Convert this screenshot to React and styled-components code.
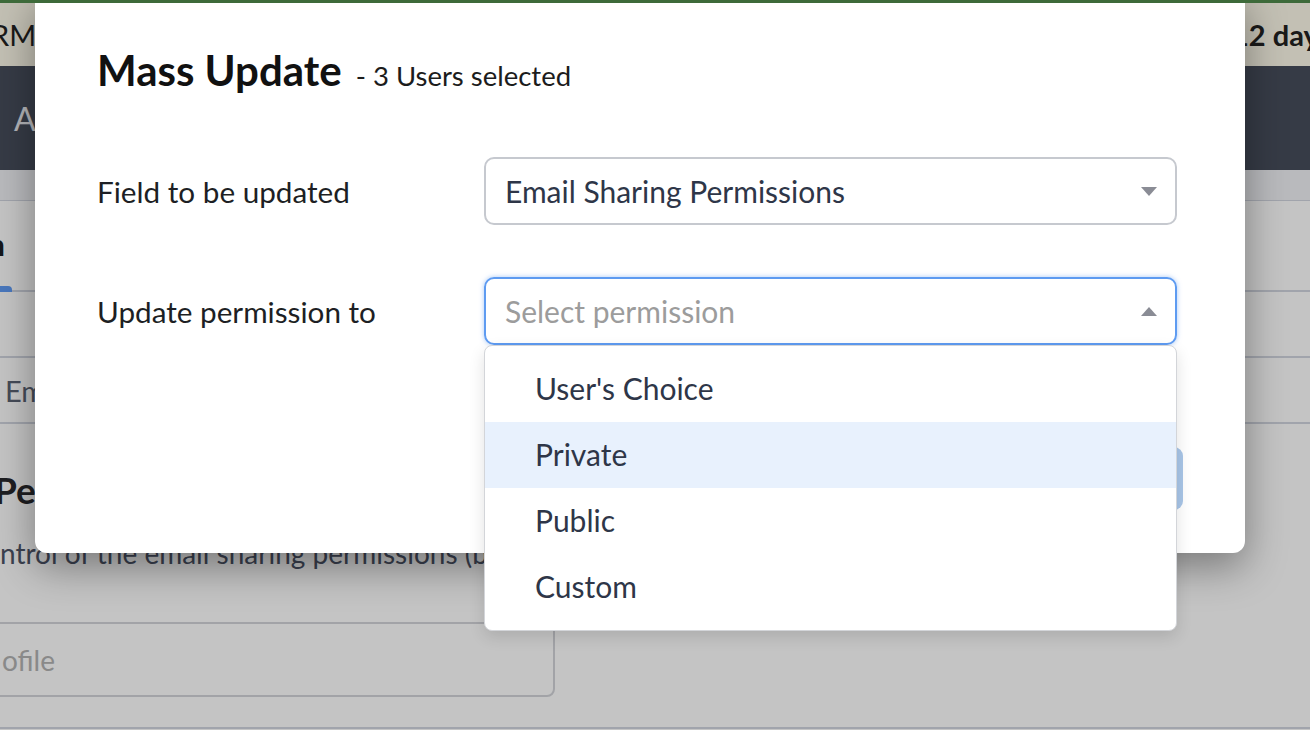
import styled, { createGlobalStyle } from "styled-components";

const GlobalStyle = createGlobalStyle`
  html, body {
    margin: 0;
    padding: 0;
  }
  body {
    font-family: Lato, "Open Sans", Arial, sans-serif;
    background: #fff;
    overflow: hidden;
  }
`;

const options = ["User's Choice", "Private", "Public", "Custom"];

function Caret({ up }) {
  return (
    <CaretIcon viewBox="0 0 16 9" $up={up}>
      <polygon points="0,0 16,0 8,9" fill="#8a8c95" />
    </CaretIcon>
  );
}

export default function App() {
  return (
    <Screen>
      <GlobalStyle />
      <TopStripe />
      <Viewport>
        <Page>
          <Banner>
            <BannerLeft>RM</BannerLeft>
            <BannerRight>12 days left</BannerRight>
          </Banner>
          <NavBar>
            <NavItem>Admin</NavItem>
          </NavBar>
          <SubBar />
          <TabStrip>
            <Tab>n</Tab>
          </TabStrip>
          <ListRow />
          <ListRow>
            <RowText>Email Sharing Permissions</RowText>
          </ListRow>
          <Section>
            <SectionTitle>Permissions</SectionTitle>
            <SectionText>
              ntrol of the email sharing permissions (by profile)
            </SectionText>
            <ProfileInput>ofile</ProfileInput>
          </Section>
          <BottomRule />
        </Page>
        <Overlay />
        <Modal>
          <TitleRow>
            <Title>Mass Update</Title>
            <Subtitle>- 3 Users selected</Subtitle>
          </TitleRow>
          <Form>
            <FormRow>
              <Label>Field to be updated</Label>
              <SelectWrap>
                <SelectBox>
                  <SelectValue>Email Sharing Permissions</SelectValue>
                  <Caret />
                </SelectBox>
              </SelectWrap>
            </FormRow>
            <FormRow>
              <Label>Update permission to</Label>
              <SelectWrap>
                <SelectBox $open>
                  <SelectValue $placeholder>Select permission</SelectValue>
                  <Caret up />
                </SelectBox>
                <Menu>
                  {options.map((o) => (
                    <Option key={o} $active={o === "Private"}>
                      {o}
                    </Option>
                  ))}
                </Menu>
              </SelectWrap>
            </FormRow>
          </Form>
          <Footer>
            <GhostButton>Cancel</GhostButton>
            <PrimaryButton>Update</PrimaryButton>
          </Footer>
        </Modal>
      </Viewport>
    </Screen>
  );
}

const Screen = styled.div`
  width: 1310px;
  height: 730px;
  display: flex;
  flex-direction: column;
  overflow: hidden;
`;

const TopStripe = styled.div`
  height: 3px;
  background: #3d6a3a;
  flex-shrink: 0;
`;

const Viewport = styled.div`
  position: relative;
  flex: 1;
  overflow: hidden;
`;

const Page = styled.div`
  display: flex;
  flex-direction: column;
  background: #fff;
  height: 100%;
`;

const Banner = styled.div`
  height: 63px;
  background: #fefaea;
  display: grid;
  grid-template-columns: 1fr 78px;
  align-items: center;
  font-size: 29px;
  color: #222;
`;

const BannerLeft = styled.span`
  margin-left: -9px;
`;

const BannerRight = styled.span`
  font-weight: 700;
  white-space: nowrap;
`;

const NavBar = styled.div`
  height: 104px;
  background: #474d5c;
  display: flex;
  align-items: center;
  padding-left: 14px;
`;

const NavItem = styled.span`
  font-size: 32px;
  color: #eaecf1;
`;

const SubBar = styled.div`
  height: 30px;
  background: #f1f2f6;
  border-bottom: 1px solid #d2d6e0;
`;

const TabStrip = styled.div`
  height: 89px;
  display: flex;
  align-items: flex-end;
  border-bottom: 2px solid #d2d6e0;
`;

const Tab = styled.div`
  position: relative;
  margin-left: -12px;
  padding: 0 7px 28px 0;
  font-size: 30px;
  font-weight: 700;
  color: #1d1f24;

  &::after {
    content: "";
    position: absolute;
    left: 0;
    right: 0;
    bottom: -2px;
    height: 6px;
    background: #5f9bf5;
    border-radius: 0 4px 0 0;
  }
`;

const ListRow = styled.div`
  height: 64px;
  display: flex;
  align-items: center;
  padding-left: 5px;
  border-bottom: 2px solid #d2d6e0;
`;

const RowText = styled.span`
  font-size: 29px;
  color: #5a6273;
`;

const Section = styled.div`
  display: flex;
  flex-direction: column;
  padding-top: 44px;
`;

const SectionTitle = styled.h2`
  margin: 0 0 0 -6px;
  font-size: 37px;
  font-weight: 700;
  color: #27282c;
  line-height: 1.2;
`;

const SectionText = styled.p`
  margin: 24px 0 0;
  font-size: 28px;
  color: #4d5568;
  white-space: nowrap;
`;

const ProfileInput = styled.div`
  margin-top: 52px;
  margin-left: -20px;
  width: 575px;
  height: 75px;
  border: 2px solid #d3d5da;
  border-radius: 0 8px 8px 0;
  display: flex;
  align-items: center;
  padding-left: 20px;
  box-sizing: border-box;
  font-size: 28px;
  color: #b3b3b3;
`;

const BottomRule = styled.div`
  margin-top: 30px;
  border-bottom: 2px solid #d2d6e0;
`;

const Overlay = styled.div`
  position: absolute;
  inset: 0;
  background: rgba(0, 0, 0, 0.23);
`;

const Modal = styled.div`
  position: absolute;
  left: 35px;
  top: -12px;
  width: 1210px;
  height: 562px;
  box-sizing: border-box;
  padding: 54px 62px 43px;
  background: #fff;
  border-radius: 12px;
  box-shadow: 0 14px 40px rgba(0, 0, 0, 0.38);
  display: flex;
  flex-direction: column;
`;

const TitleRow = styled.div`
  display: flex;
  align-items: baseline;
  gap: 14px;
`;

const Title = styled.h1`
  margin: 0;
  font-size: 42px;
  font-weight: 700;
  line-height: 1.2;
  color: #111;
`;

const Subtitle = styled.span`
  font-size: 27.5px;
  color: #1c1c1c;
`;

const Form = styled.div`
  margin-top: 62px;
  padding-right: 6px;
  display: flex;
  flex-direction: column;
  gap: 52px;
`;

const FormRow = styled.div`
  display: grid;
  grid-template-columns: 387px 1fr;
  align-items: center;
`;

const Label = styled.span`
  font-size: 29.7px;
  color: #1d1f24;
`;

const SelectWrap = styled.div`
  position: relative;
`;

const SelectBox = styled.div`
  height: 68px;
  box-sizing: border-box;
  border: 2px solid ${({ $open }) => ($open ? "#5e9bf1" : "#c6c9cf")};
  border-radius: 10px;
  box-shadow: ${({ $open }) =>
    $open ? "0 0 5px rgba(94, 155, 241, 0.55)" : "none"};
  display: flex;
  align-items: center;
  justify-content: space-between;
  padding: 0 18px 0 19px;
`;

const SelectValue = styled.span`
  font-size: 30px;
  color: ${({ $placeholder }) => ($placeholder ? "#9c9c9c" : "#2e3648")};
`;

const CaretIcon = styled.svg`
  width: 16px;
  height: 9px;
  transform: ${({ $up }) => ($up ? "rotate(180deg)" : "none")};
`;

const Menu = styled.div`
  position: absolute;
  z-index: 2;
  top: 100%;
  left: 0;
  right: 0;
  padding: 10px 0;
  background: #fff;
  border: 1px solid #d3d5d9;
  border-radius: 8px;
  box-shadow: 0 6px 16px rgba(0, 0, 0, 0.12);
`;

const Option = styled.div`
  height: 66px;
  display: flex;
  align-items: center;
  padding-left: 50px;
  padding-bottom: 2px;
  box-sizing: border-box;
  font-size: 30px;
  color: #2e3648;
  background: ${({ $active }) => ($active ? "#e8f1fd" : "transparent")};
`;

const Footer = styled.div`
  margin-top: auto;
  display: flex;
  justify-content: flex-end;
  gap: 16px;
`;

const ButtonBase = styled.button`
  height: 63px;
  padding: 0 36px;
  border-radius: 9px;
  font-family: inherit;
  font-size: 26px;
`;

const GhostButton = styled(ButtonBase)`
  background: #fff;
  border: 2px solid #c6c9cf;
  color: #2e3648;
`;

const PrimaryButton = styled(ButtonBase)`
  background: #a9c6e8;
  border: none;
  color: #fff;
`;
